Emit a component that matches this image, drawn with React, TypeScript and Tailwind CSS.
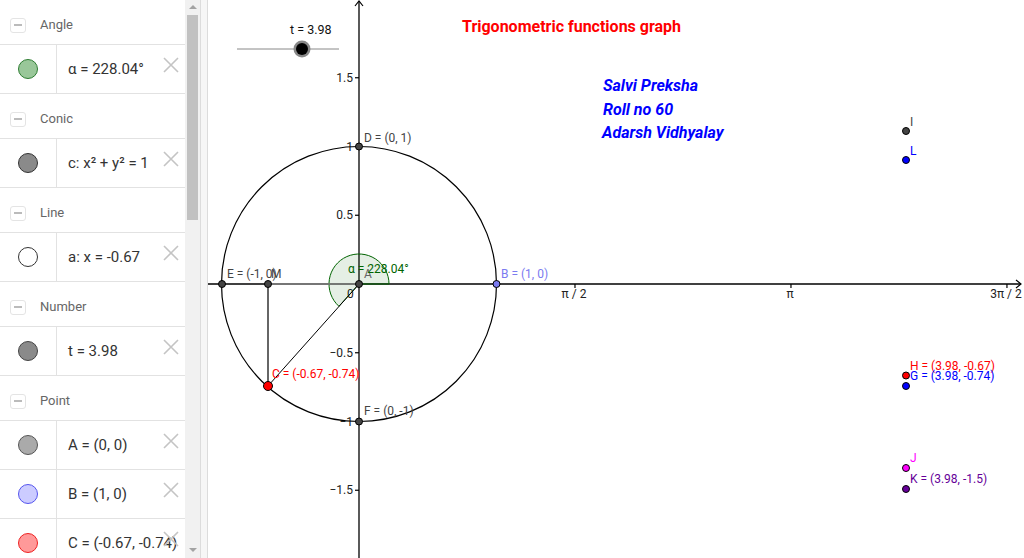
import React from 'react';

type Item = { text: string; fill: string; stroke: string };
type Group = { title: string; items: Item[] };

const groups: Group[] = [
  { title: 'Angle', items: [{ text: 'α = 228.04°', fill: '#99c799', stroke: '#2e7d32' }] },
  { title: 'Conic', items: [{ text: 'c: x² + y² = 1', fill: '#8a8a8a', stroke: '#333333' }] },
  { title: 'Line', items: [{ text: 'a: x = -0.67', fill: '#ffffff', stroke: '#333333' }] },
  { title: 'Number', items: [{ text: 't = 3.98', fill: '#8a8a8a', stroke: '#444444' }] },
  {
    title: 'Point',
    items: [
      { text: 'A = (0, 0)', fill: '#aaaaaa', stroke: '#555555' },
      { text: 'B = (1, 0)', fill: '#ccccff', stroke: '#5555ee' },
      { text: 'C = (-0.67, -0.74)', fill: '#ff9999', stroke: '#ee2222' },
    ],
  },
];

function DeleteIcon() {
  return (
    <svg width="16" height="16" viewBox="0 0 16 16" className="absolute left-[163px] top-[12px]">
      <path d="M1 1 L15 15 M15 1 L1 15" stroke="#c4c4c4" strokeWidth="1.6" />
    </svg>
  );
}

function AlgebraRow({ item }: { item: Item }) {
  return (
    <div className="relative flex h-[49px] border-b border-[#e2e2e2]">
      <div className="flex w-[57px] shrink-0 items-center justify-center border-r border-[#e2e2e2]">
        <div
          className="h-[20px] w-[20px] rounded-full border"
          style={{ backgroundColor: item.fill, borderColor: item.stroke }}
        />
      </div>
      <div className="flex items-center whitespace-nowrap pl-[11px] text-[15px] text-[#333]">{item.text}</div>
      <DeleteIcon />
    </div>
  );
}

function AlgebraView() {
  return (
    <div className="h-full w-[185px] shrink-0 overflow-hidden bg-white font-['Roboto',sans-serif]">
      {groups.map((g) => (
        <div key={g.title}>
          <div className="flex h-[45px] items-center border-b border-[#e2e2e2] pt-[6px]">
            <div className="ml-[10px] flex h-[15px] w-[16px] items-center justify-center rounded-[3px] border border-[#e4e4e4]">
              <div className="h-[1.5px] w-[8px] bg-[#bbb]" />
            </div>
            <span className="ml-[14px] text-[13px] text-[#666]">{g.title}</span>
          </div>
          {g.items.map((it) => (
            <AlgebraRow key={it.text} item={it} />
          ))}
        </div>
      ))}
    </div>
  );
}

function Scrollbar() {
  return (
    <div className="flex h-full w-[15px] shrink-0 flex-col items-center bg-[#f1f1f1]">
      <div className="mt-[5px] h-0 w-0 border-x-[4px] border-b-[4px] border-x-transparent border-b-[#a3a3a3]" />
      <div className="mt-[6px] h-[205px] w-[11px] bg-[#c1c1c1]" />
      <div className="flex-1" />
      <div className="mb-[6px] h-0 w-0 border-x-[4px] border-t-[4px] border-x-transparent border-t-[#a3a3a3]" />
    </div>
  );
}

const O = { x: 359, y: 284 };
const U = 137.5;

function Pt({ x, y, fill, r = 3.5 }: { x: number; y: number; fill: string; r?: number }) {
  return <circle cx={x} cy={y} r={r} fill={fill} stroke="#000" strokeWidth="1" />;
}

function Graphics() {
  const a = (228.04 * Math.PI) / 180;
  const ar = 30;
  const ex = O.x + ar * Math.cos(a);
  const ey = O.y - ar * Math.sin(a);
  const sector = `M ${O.x} ${O.y} L ${O.x + ar} ${O.y} A ${ar} ${ar} 0 1 0 ${ex} ${ey} Z`;
  const yTicks = [
    { v: 1.5, l: '1.5' },
    { v: 1, l: '1' },
    { v: 0.5, l: '0.5' },
    { v: -0.5, l: '−0.5' },
    { v: -1, l: '−1' },
    { v: -1.5, l: '−1.5' },
  ];
  const xTicks = [
    { v: Math.PI / 2, l: 'π / 2' },
    { v: Math.PI, l: 'π' },
    { v: (3 * Math.PI) / 2, l: '3π / 2' },
  ];
  return (
    <div className="h-full flex-1 bg-white">
      <svg width="816" height="558" viewBox="208 0 816 558" fontFamily="Roboto, sans-serif" fontSize="12">
        {/* axes */}
        <line x1="208" y1={O.y} x2="1021" y2={O.y} stroke="#000" strokeWidth="1.3" />
        <path d="M1016 280 L1021 284 L1016 288" fill="none" stroke="#000" strokeWidth="1.2" />
        <line x1={O.x} y1="1" x2={O.x} y2="558" stroke="#000" strokeWidth="1.3" />
        <path d={`M${O.x - 4} 6 L${O.x} 1 L${O.x + 4} 6`} fill="none" stroke="#000" strokeWidth="1.2" />
        {yTicks.map((t) => {
          const y = O.y - t.v * U;
          return (
            <g key={t.l}>
              <line x1={O.x - 4} y1={y} x2={O.x} y2={y} stroke="#000" strokeWidth="1.2" />
              <text x="353" y={y + 4} textAnchor="end" fill="#222">
                {t.l}
              </text>
            </g>
          );
        })}
        {xTicks.map((t) => {
          const x = O.x + t.v * U;
          return (
            <g key={t.l}>
              <line x1={x} y1={O.y} x2={x} y2={O.y + 4} stroke="#000" strokeWidth="1.2" />
              <text x={x - 1} y="298" textAnchor="middle" fill="#222">
                {t.l}
              </text>
            </g>
          );
        })}
        <text x="347" y="298" fill="#222">
          0
        </text>

        {/* unit circle */}
        <circle cx={O.x} cy={O.y} r={U} fill="none" stroke="#000" strokeWidth="1.2" />

        {/* angle */}
        <path d={sector} fill="rgba(0,100,0,0.1)" stroke="#006400" strokeWidth="1" />

        {/* segments */}
        <line x1="268" y1={O.y} x2={O.x} y2={O.y} stroke="#888" strokeWidth="1.4" />
        <line x1="268" y1={O.y} x2="268" y2="386" stroke="#666" strokeWidth="2" />
        <line x1={O.x} y1={O.y} x2="268" y2="386" stroke="#000" strokeWidth="1" />

        {/* slider */}
        <line x1="237" y1="49" x2="339" y2="49" stroke="#888" strokeWidth="1" />
        <circle cx="302" cy="49" r="8.5" fill="#888" />
        <circle cx="302" cy="49" r="6" fill="#000" />
        <text x="290" y="34" fontSize="12.5" fill="#111">
          t = 3.98
        </text>

        {/* title and credits */}
        <text x="462" y="32" fontSize="16" fontWeight="700" fill="#ff0000">
          Trigonometric functions graph
        </text>
        <g fontSize="16" fontWeight="700" fontStyle="italic" fill="#0000ff">
          <text x="603" y="91">Salvi Preksha</text>
          <text x="603" y="115">Roll no 60</text>
          <text x="602" y="138">Adarsh Vidhyalay</text>
        </g>

        {/* labels */}
        <text x="227" y="278" fill="#444">
          E = (-1, 0)
        </text>
        <text x="271" y="278" fill="#444">
          M
        </text>
        <text x="364" y="278" fill="#666">
          A
        </text>
        <text x="348" y="273" fill="#006400">
          α = 228.04°
        </text>
        <text x="501" y="278" fill="#7b7bf0">
          B = (1, 0)
        </text>
        <text x="364" y="142" fill="#444">
          D = (0, 1)
        </text>
        <text x="272" y="378" fill="#ff0000">
          C = (-0.67, -0.74)
        </text>
        <text x="364" y="415" fill="#444">
          F = (0, -1)
        </text>

        {/* points on circle */}
        <Pt x={222} y={O.y} fill="#444" />
        <Pt x={268} y={O.y} fill="#444" />
        <Pt x={O.x} y={O.y - U} fill="#444" />
        <Pt x={O.x} y={O.y + U} fill="#444" />
        <Pt x={O.x} y={O.y} fill="#444" />
        <Pt x={O.x + U} y={O.y} fill="#7b7bf0" />
        <Pt x={268} y={386} fill="#ff0000" r={4.5} />

        {/* graph points */}
        <text x="910" y="126" fill="#444">
          I
        </text>
        <Pt x={906} y={131} fill="#444" />
        <text x="910" y="155" fill="#0000ff">
          L
        </text>
        <Pt x={906} y={160} fill="#0000ff" />
        <text x="910" y="370" fill="#ff0000">
          H = (3.98, -0.67)
        </text>
        <text x="910" y="380" fill="#0000ff">
          G = (3.98, -0.74)
        </text>
        <Pt x={906} y={375.5} fill="#ff0000" />
        <Pt x={906} y={386} fill="#0000ff" />
        <text x="910" y="462" fill="#ff00ff">
          J
        </text>
        <Pt x={906} y={468} fill="#ff00ff" />
        <text x="910" y="483" fill="#660099">
          K = (3.98, -1.5)
        </text>
        <Pt x={906} y={489} fill="#660099" />
      </svg>
    </div>
  );
}

export default function App() {
  return (
    <div className="flex h-[558px] w-[1024px] overflow-hidden bg-white">
      <AlgebraView />
      <Scrollbar />
      <div className="h-full w-[8px] shrink-0 border-x border-[#dcdcdc] bg-[#f6f6f6]" />
      <Graphics />
    </div>
  );
}
